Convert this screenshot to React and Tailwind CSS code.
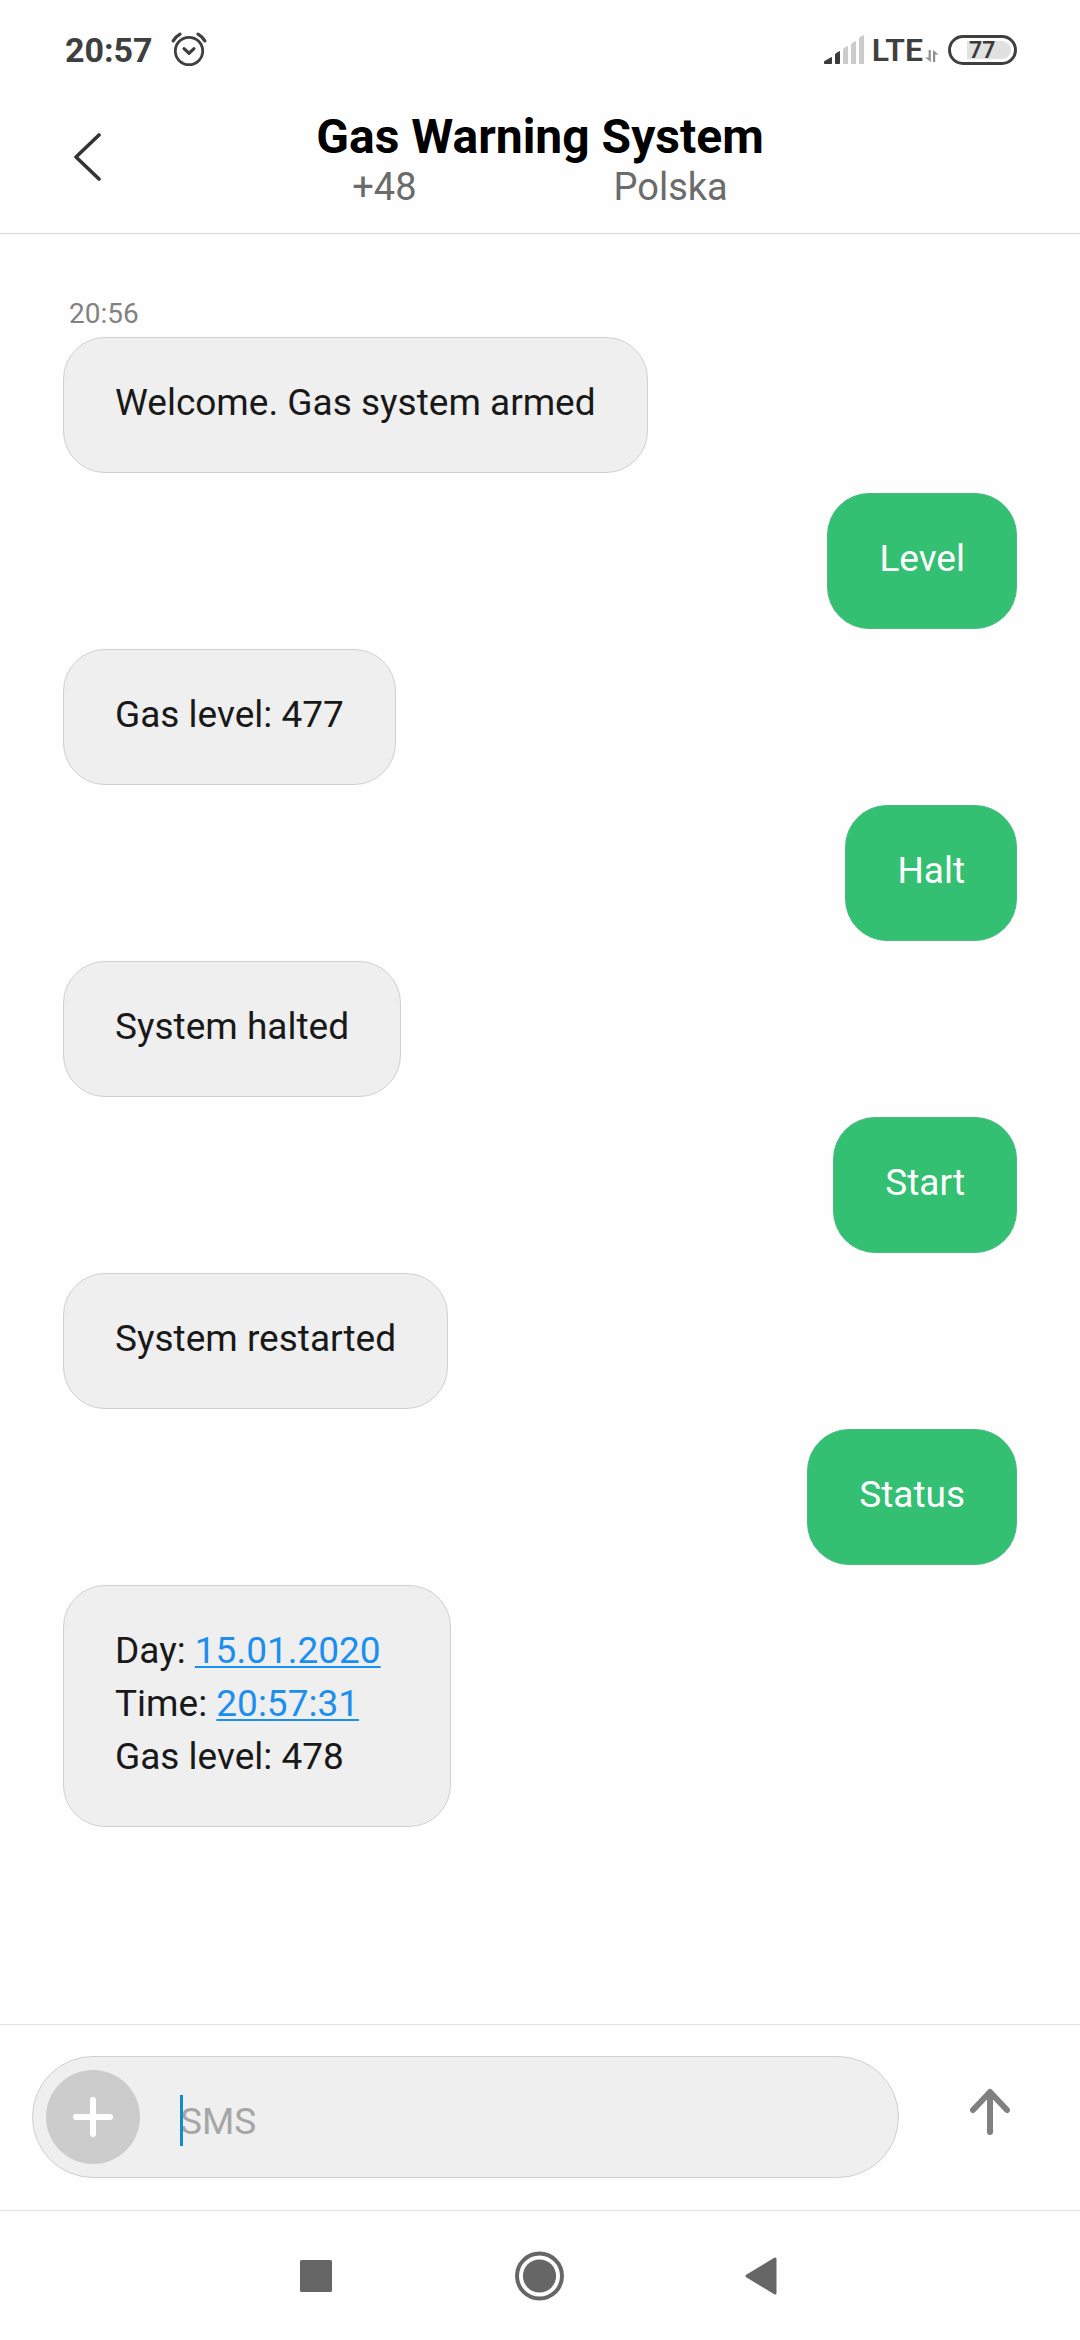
import React from "react";

const messages = [
  { from: "them", text: "Welcome. Gas system armed" },
  { from: "me", text: "Level" },
  { from: "them", text: "Gas level: 477" },
  { from: "me", text: "Halt" },
  { from: "them", text: "System halted" },
  { from: "me", text: "Start" },
  { from: "them", text: "System restarted" },
  { from: "me", text: "Status" },
];

function AlarmIcon() {
  return (
    <svg width="36" height="36" viewBox="0 0 36 36" fill="none" stroke="#3f3f3f" strokeWidth="2.8" strokeLinecap="round" strokeLinejoin="round" aria-hidden="true">
      <circle cx="18" cy="19" r="13.7" />
      <path d="M2.2 8.8Q4.8 4.6 9 2.2" strokeWidth="3.2" />
      <path d="M33.8 8.8Q31.2 4.6 27 2.2" strokeWidth="3.2" />
      <path d="M13 16.6l5 4.6 5-4.6" strokeWidth="3.2" />
    </svg>
  );
}

function SignalIcon() {
  return (
    <svg width="40" height="30" viewBox="0 0 40 30" strokeWidth="1" strokeLinejoin="round" aria-hidden="true">
      <g fill="#3a3a3a" stroke="#3a3a3a">
        <path d="M.5 26.5L7.5 22.5V28.5H.5z" />
        <path d="M11.5 19L15.5 16.5V28.5H11.5z" />
      </g>
      <g fill="#cbcbcb" stroke="#cbcbcb">
        <path d="M19.5 14L23.5 11.5V28.5H19.5z" />
        <path d="M27.5 9L31.5 6.5V28.5H27.5z" />
        <path d="M35.5 3L39.5 .5V28.5H35.5z" />
      </g>
    </svg>
  );
}

function DataArrows() {
  return (
    <svg width="14" height="12" viewBox="0 0 14 12" fill="#8f8f8f" aria-hidden="true">
      <path d="M3.6 0H5.8V12L0 7.6H3.6z" />
      <path d="M10.2 12H8V0L13.6 4.4H10.2z" />
    </svg>
  );
}

function StatusBar() {
  return (
    <div className="flex h-[100px] items-center justify-between pl-[65px] pr-[63px]">
      <div className="flex items-center gap-[18px]">
        <span className="text-[34px] leading-[40px] font-bold text-[#3f3f3f]">20:57</span>
        <AlarmIcon />
      </div>
      <div className="flex items-center">
        <SignalIcon />
        <span className="ml-2 text-[32px] leading-[40px] font-semibold text-[#3f3f3f]">LTE</span>
        <span className="mt-3 ml-[2px]">
          <DataArrows />
        </span>
        <span className="ml-[9px] flex h-[30px] w-[69px] items-center rounded-full border-3 border-[#3f3f3f] pr-[3px] pl-4">
          <span className="flex h-[18px] flex-1 items-center rounded-l-xs rounded-r-full bg-[#e1e1e1] pl-[2px] text-[23px] leading-[18px] font-semibold text-[#3a3a3a]">
            <span className="pt-[2px]">77</span>
          </span>
        </span>
      </div>
    </div>
  );
}

function Header() {
  return (
    <header className="grid grid-cols-[1fr_auto_1fr] items-start border-b border-[#d9d9d9] pb-6">
      <button type="button" aria-label="Back" className="mt-6 ml-[62px] flex h-[66px] w-[52px] items-center justify-center">
        <svg width="28" height="50" viewBox="0 0 28 50" fill="none" stroke="#333" strokeWidth="3.6" strokeLinecap="round" strokeLinejoin="round" aria-hidden="true">
          <path d="M25 3L2 25 25 47" />
        </svg>
      </button>
      <div className="text-center">
        <h1 className="mt-[9px] text-[48px] leading-[56px] font-bold text-black">Gas Warning System</h1>
        <p className="flex justify-between px-9 text-[38px] leading-[44px] text-[#6b6b6b]">
          <span>+48</span>
          <span>Polska</span>
        </p>
      </div>
    </header>
  );
}

function Bubble({ mine, children }) {
  return (
    <li
      className={
        "rounded-[42px] border px-[51px] pt-[38px] pb-[43px] text-[37px] leading-[53px] whitespace-pre-wrap " +
        (mine
          ? "self-end border-[#4db981] bg-[#33c072] text-white"
          : "self-start border-[#d0d0d0] bg-[#efefef] text-[#191919]")
      }
    >
      {children}
    </li>
  );
}

function Conversation() {
  return (
    <main className="flex-1 px-[63px] pt-[62px]">
      <time className="block pl-[6px] text-[28px] leading-[36px] text-[#828282]">20:56</time>
      <ul className="mt-[5px] flex flex-col gap-5">
        {messages.map((m) => (
          <Bubble key={m.text} mine={m.from === "me"}>
            {m.text}
          </Bubble>
        ))}
        <Bubble>
          Day:{" "}
          <a href="#date" className="text-[#1a8ff0] underline decoration-2 underline-offset-[3px]">15.01.2020</a>
          {"  \n"}
          Time:{" "}
          <a href="#time" className="text-[#1a8ff0] underline decoration-2 underline-offset-[3px]">20:57:31</a>
          {"\n"}
          Gas level: 478
        </Bubble>
      </ul>
    </main>
  );
}

function Composer() {
  return (
    <form className="flex items-center border-y border-[#e2e2e2] pt-[31px] pb-8 pl-8" onSubmit={(e) => e.preventDefault()}>
      <div className="flex h-[122px] flex-1 items-center rounded-full border border-[#cfcfcf] bg-[#efefef] pl-[13px]">
        <button type="button" aria-label="Add attachment" className="flex size-[94px] items-center justify-center rounded-full bg-[#cccccc]">
          <svg width="40" height="40" viewBox="0 0 40 40" stroke="#fff" strokeWidth="6" strokeLinecap="round" aria-hidden="true">
            <path d="M20 3v34M3 20h34" />
          </svg>
        </button>
        <div className="relative ml-10 flex-1">
          <input
            type="text"
            aria-label="Message"
            placeholder="SMS"
            className="block w-full bg-transparent pt-2 text-[37px] leading-[53px] text-[#191919] outline-none placeholder:text-[#a6a6a6]"
          />
          <span className="absolute top-2 bottom-[2px] left-0 w-[3px] bg-[#118ccb]" aria-hidden="true" />
        </div>
      </div>
      <button type="submit" aria-label="Send" className="flex h-[122px] w-[181px] items-center justify-center pb-[10px]">
        <svg width="42" height="48" viewBox="0 0 42 48" fill="none" stroke="#808080" strokeWidth="6" strokeLinecap="round" strokeLinejoin="round" aria-hidden="true">
          <path d="M21 4V44M4 22L21 4 38 22" />
        </svg>
      </button>
    </form>
  );
}

function NavBar() {
  return (
    <nav className="flex h-[129px] items-center justify-center">
      <button type="button" aria-label="Recent apps" className="flex h-full w-[222px] items-center justify-center">
        <svg width="36" height="36" viewBox="0 0 36 36" fill="#666" aria-hidden="true">
          <rect x="0" y="2" width="32" height="32" rx="1.5" />
        </svg>
      </button>
      <button type="button" aria-label="Home" className="flex h-full w-[222px] items-center justify-center">
        <svg width="50" height="50" viewBox="0 0 50 50" aria-hidden="true">
          <circle cx="24.5" cy="25" r="22.5" fill="none" stroke="#666" strokeWidth="4" />
          <circle cx="24.5" cy="25" r="16.6" fill="#666" />
        </svg>
      </button>
      <button type="button" aria-label="Back" className="flex h-full w-[222px] items-center justify-center">
        <svg width="36" height="38" viewBox="0 0 36 38" fill="#666" stroke="#666" strokeWidth="3" strokeLinejoin="round" aria-hidden="true">
          <path d="M3 19L31 2V36z" />
        </svg>
      </button>
    </nav>
  );
}

export default function App() {
  return (
    <div className="flex min-h-screen flex-col bg-[#fefefe] font-[Roboto,sans-serif]">
      <StatusBar />
      <Header />
      <Conversation />
      <Composer />
      <NavBar />
    </div>
  );
}
